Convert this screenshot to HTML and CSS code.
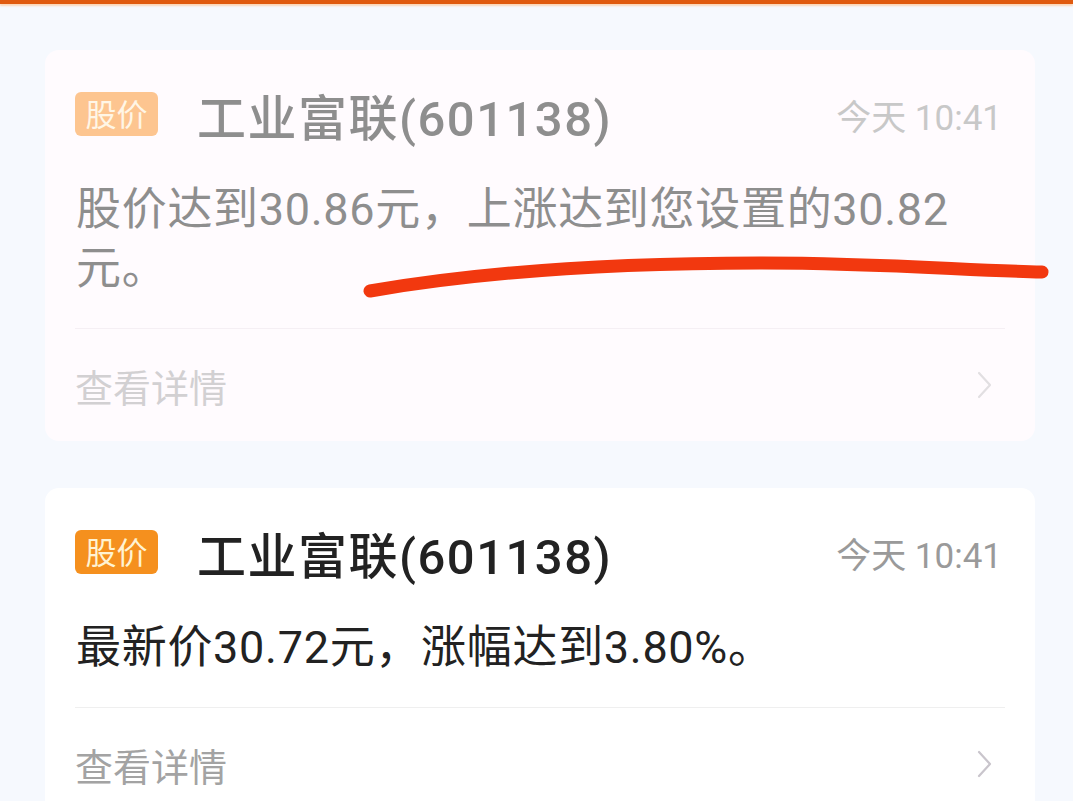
FILE: index.html
```html
<!DOCTYPE html>
<html lang="zh-CN">

<head>
    <meta charset="UTF-8" />
    <meta name="viewport" content="width=device-width, initial-scale=1.0" />
    <title>股价提醒</title>
    <link rel="stylesheet" href="styles.css">
</head>

<body>
    <div class="top-bar"></div>

    <div class="list">
        <div class="card card-read">
            <div class="card-head">
                <span class="tag">股价</span>
                <span class="title">工业富联(601138)</span>
                <span class="time">今天 10:41</span>
            </div>
            <p class="msg">股价达到30.86元，上涨达到您设置的30.82元。</p>
            <div class="card-foot">
                <span>查看详情</span>
                <svg class="arrow" width="20" height="30" viewBox="0 0 20 30">
                    <path d="M4 3 L15 15 L4 27" fill="none" stroke="currentColor" stroke-width="2.2"
                        stroke-linecap="round" stroke-linejoin="round" />
                </svg>
            </div>
        </div>

        <div class="card">
            <div class="card-head">
                <span class="tag">股价</span>
                <span class="title">工业富联(601138)</span>
                <span class="time">今天 10:41</span>
            </div>
            <p class="msg">最新价30.72元，涨幅达到3.80%。</p>
            <div class="card-foot">
                <span>查看详情</span>
                <svg class="arrow" width="20" height="30" viewBox="0 0 20 30">
                    <path d="M4 3 L15 15 L4 27" fill="none" stroke="currentColor" stroke-width="2.2"
                        stroke-linecap="round" stroke-linejoin="round" />
                </svg>
            </div>
        </div>
    </div>

    <!-- hand drawn mark over the first card -->
    <svg class="mark" width="1073" height="801" viewBox="0 0 1073 801">
        <path d="M370 291 C 480 272, 620 263, 760 263 C 880 263, 960 270, 1042 272" fill="none" stroke="#f2380f"
            stroke-width="13" stroke-linecap="round" />
    </svg>
</body>

</html>
```

FILE: styles.css
```css
body {
    margin: 0;
    background-color: #f6f9fe;
    font-family: Roboto, "Noto Sans CJK SC", sans-serif;
    overflow: hidden;
    height: 801px;
}

.top-bar {
    height: 4px;
    background-color: #e05a0f;
    box-shadow: 0 2px 2px #fbd6b8;
}

.list {
    padding: 46px 38px 0 45px;
    display: flex;
    flex-direction: column;
    gap: 47px;
}

.card {
    background-color: #ffffff;
    border-radius: 14px;
    padding: 42px 30px 0 30px;
}

.card-head {
    display: flex;
    align-items: center;
    height: 44px;
}

.tag {
    width: 83px;
    height: 44px;
    border-radius: 6px;
    background-color: #f5901e;
    color: #fff3d2;
    font-size: 31px;
    line-height: 47px;
    text-align: center;
}

.title {
    margin-left: 39px;
    font-size: 49px;
    font-weight: 500;
    letter-spacing: 1.5px;
    color: #222222;
    flex: 1;
}

.time {
    font-size: 35px;
    color: #9a9a9a;
    margin-right: 3px;
}

.msg {
    margin: 44px 0 30px 1px;
    max-width: 910px;
    font-size: 45px;
    line-height: 59px;
    letter-spacing: 0.7px;
    color: #222222;
}

.card-foot {
    border-top: 1px solid #efefef;
    height: 112px;
    display: flex;
    align-items: center;
    justify-content: space-between;
    font-size: 38px;
    color: #a3a3a3;
}

.arrow {
    color: #c9c5cc;
    margin-right: 10px;
}

.card-read {
    background-color: #fffbfe;
}

.card-read .tag {
    background-color: #fdc590;
    color: #fff6e6;
}

.card-read .title {
    color: #8e8e8e;
}

.card-read .time {
    color: #c8c8c8;
}

.card-read .msg {
    color: #8e8e8e;
}

.card-read .card-foot {
    border-top-color: #f5eff4;
    color: #d2d0d2;
}

.card-read .arrow {
    color: #e2dfe2;
}

.mark {
    position: absolute;
    top: 0;
    left: 0;
}
```
